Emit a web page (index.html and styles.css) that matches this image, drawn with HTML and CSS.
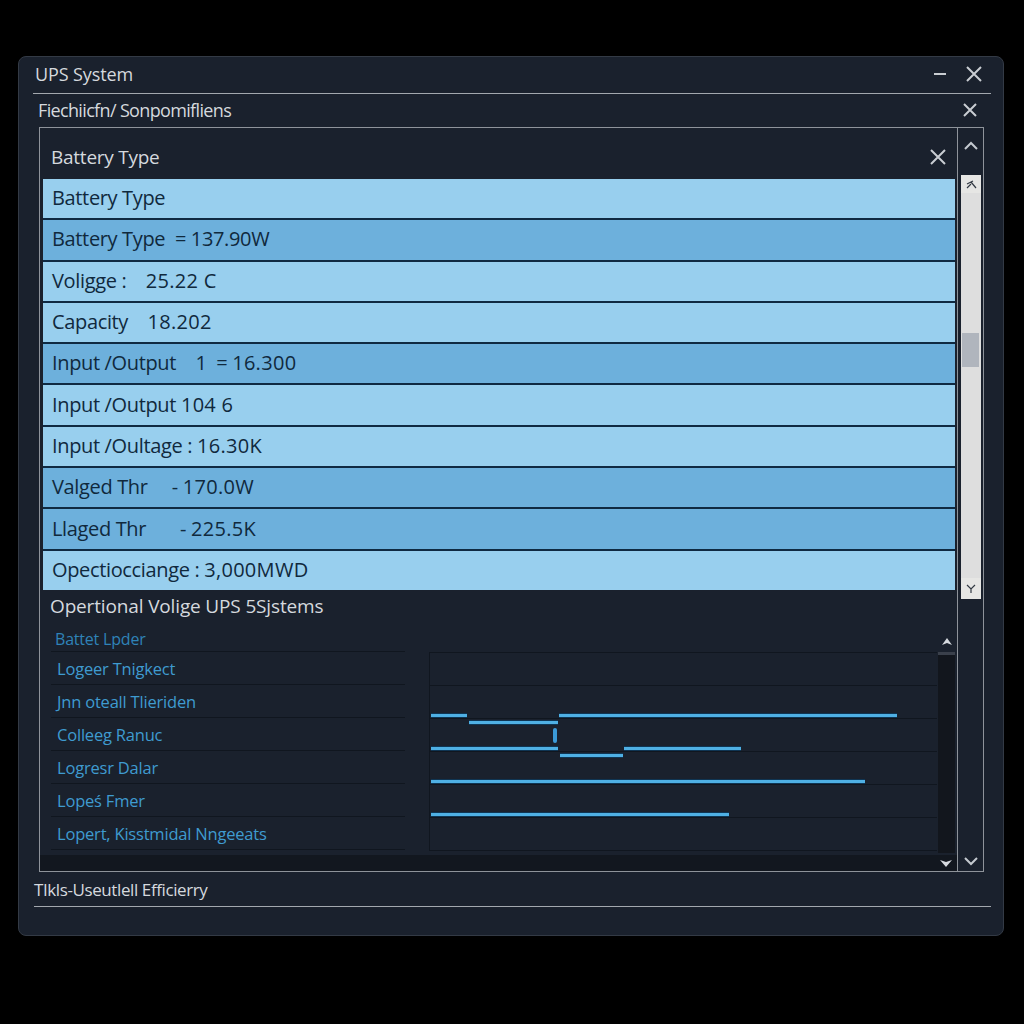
FILE: index.html
```html
<!DOCTYPE html>
<html lang="en">
<head>
    <meta charset="UTF-8">
    <title>UPS System</title>
    <link rel="stylesheet" href="styles.css">
</head>
<body>
    <div class="window">
        <div class="titlebar">
            <span class="title">UPS System</span>
            <svg class="icon-min" width="14" height="4" viewBox="0 0 14 4"><path d="M1 2H13"/></svg>
            <svg class="icon-x big" width="18" height="18" viewBox="0 0 18 18"><path d="M2 2L16 16M16 2L2 16"/></svg>
        </div>
        <div class="subbar">
            <span class="subtitle">Fiechiicfn/ Sonpomifliens</span>
            <svg class="icon-x" width="16" height="16" viewBox="0 0 16 16"><path d="M2 2L14 14M14 2L2 14"/></svg>
        </div>

        <div class="frame">
            <div class="main">
                <div class="panel-head">
                    <span>Battery Type</span>
                    <svg class="icon-x" width="18" height="18" viewBox="0 0 18 18"><path d="M2 2L16 16M16 2L2 16"/></svg>
                </div>

                <div class="rows">
                    <div class="row">Battery Type</div>
                    <div class="row dark">Battery Type &nbsp;= 137.90W</div>
                    <div class="row">Voligge : &nbsp; &nbsp;<span class="val">25.22 C</span></div>
                    <div class="row">Capacity &nbsp; &nbsp;<span class="val">18.202</span></div>
                    <div class="row dark">Input /Output &nbsp; &nbsp;1 &nbsp;= <span class="val">16.300</span></div>
                    <div class="row">Input /Output <span class="val">104 6</span></div>
                    <div class="row">Input /Oultage : <span class="val">16.30K</span></div>
                    <div class="row dark">Valged Thr &nbsp; &nbsp; - <span class="val">170.0W</span></div>
                    <div class="row dark">Llaged Thr &nbsp; &nbsp; &nbsp; - <span class="val">225.5K</span></div>
                    <div class="row">Opectiocciange : <span class="val">3,000MWD</span></div>
                </div>

                <div class="section-head">Opertional Volige UPS 5Sjstems</div>

                <div class="lower">
                    <div class="labels">
                        <div class="label first">Battet Lpder</div>
                        <div class="label">Logeer Tnigkect</div>
                        <div class="label">Jnn oteall Tlieriden</div>
                        <div class="label">Colleeg Ranuc</div>
                        <div class="label">Logresr Dalar</div>
                        <div class="label">Lopeś Fmer</div>
                        <div class="label">Lopert, Kisstmidal Nngeeats</div>
                    </div>

                    <div class="chart-col">
                        <svg class="chart" width="508" height="199" viewBox="0 0 508 199">
                            <path class="grid" d="M0.5 0.5H508M0.5 33.5H508M0.5 66.5H508M0.5 99.5H508M0.5 132.5H508M0.5 165.5H508M0.5 198.5H508M0.5 0V199"/>
                            <path class="glow" d="M2 63.5H38M130 63.5H468M40 70.5H129M2 96.5H129M195 96.5H312M131 103.5H194M2 129.5H436M2 162.5H300"/>
                            <path class="trace" d="M2 63.5H38M130 63.5H468M40 70.5H129M2 96.5H129M195 96.5H312M131 103.5H194M2 129.5H436M2 162.5H300"/>
                            <rect class="blip" x="124" y="76" width="4" height="15" rx="2"/>
                        </svg>
                    </div>

                    <div class="mini-scroll">
                        <svg class="arrow" width="12" height="9" viewBox="0 0 12 9"><path d="M6 1L11 8L6 6L1 8Z"/></svg>
                        <div class="mini-track"></div>
                    </div>
                </div>

                <div class="bottom-bar">
                    <svg class="arrow" width="14" height="9" viewBox="0 0 14 9"><path d="M1 1L7 3L13 1L7 8Z"/></svg>
                </div>
            </div>

            <div class="scroll-col">
                <svg class="chevron" width="16" height="10" viewBox="0 0 16 10"><path d="M2 8L8 2L14 8"/></svg>
                <div class="track">
                    <div class="track-btn">
                        <svg width="12" height="10" viewBox="0 0 12 10"><path d="M2 5L8 2M6 3L11 9M6 5L2 9"/></svg>
                    </div>
                    <div class="thumb"></div>
                    <div class="track-btn end">
                        <svg width="12" height="10" viewBox="0 0 12 10"><path d="M2 1L6 5L10 1M6 5V9"/></svg>
                    </div>
                </div>
                <svg class="chevron low" width="16" height="10" viewBox="0 0 16 10"><path d="M2 2L8 8L14 2"/></svg>
            </div>
        </div>

        <div class="status">TIkls-Useutlell Efficierry</div>
    </div>
</body>
</html>
```

FILE: styles.css
```css
body {
    margin: 0;
    background-color: #000;
    padding: 56px 20px 88px 18px;
    font-family: "Open Sans", "Noto Sans", sans-serif;
    color: #d5d9de;
}

svg {
    display: block;
    flex: none;
}

.window {
    height: 880px;
    box-sizing: border-box;
    background-color: #1a212d;
    border: 1px solid #333a45;
    border-radius: 8px;
    display: flex;
    flex-direction: column;
}

.titlebar {
    height: 37px;
    box-sizing: border-box;
    margin: 0 12px 0 14px;
    padding: 0 8px 3px 2px;
    border-bottom: 1px solid #a3a8ae;
    display: flex;
    align-items: center;
    gap: 18px;
}

.title {
    font-size: 18px;
    margin-right: auto;
    letter-spacing: -0.1px;
}

.icon-min path,
.icon-x path {
    stroke: #c9cdd2;
    stroke-width: 2;
    fill: none;
}

.subbar {
    height: 33px;
    box-sizing: border-box;
    margin: 0 18px 0 19px;
    padding: 0 7px 2px 0;
    display: flex;
    align-items: center;
    justify-content: space-between;
    font-size: 18px;
    letter-spacing: -0.65px;
}

.frame {
    width: 945px;
    height: 745px;
    margin-left: 20px;
    box-sizing: border-box;
    border: 1px solid #8e939a;
    display: flex;
}

.main {
    flex: 1;
    min-width: 0;
    display: flex;
    flex-direction: column;
}

.panel-head {
    height: 51px;
    padding: 6px 10px 0 11px;
    box-sizing: border-box;
    display: flex;
    align-items: center;
    justify-content: space-between;
    font-size: 19px;
    letter-spacing: -0.25px;
}

.rows {
    height: 411px;
    margin: 0 2px 0 3px;
    background-color: #0f2a42;
    display: grid;
    grid-template-rows: repeat(10, 1fr);
    gap: 2px;
}

.row {
    background-color: #98cfee;
    color: #10293d;
    font-size: 20px;
    letter-spacing: -0.35px;
    padding: 0 0 2px 9px;
    display: flex;
    align-items: center;
    white-space: pre;
}

.row.dark {
    background-color: #6db0dc;
}

.val {
    letter-spacing: 0.3px;
}

.section-head {
    height: 32px;
    padding-left: 10px;
    font-size: 19px;
    letter-spacing: -0.15px;
    display: flex;
    align-items: center;
}

.lower {
    height: 231px;
    padding-left: 11px;
    display: flex;
}

.labels {
    width: 354px;
    display: flex;
    flex-direction: column;
}

.label {
    height: 33px;
    box-sizing: border-box;
    padding-left: 6px;
    border-bottom: 1px solid #10161f;
    color: #3f9bd0;
    font-size: 16.5px;
    letter-spacing: -0.2px;
    display: flex;
    align-items: center;
}

.label.first {
    height: 30px;
    padding: 5px 0 0 4px;
    color: #2f83b8;
    font-size: 16px;
}

.chart-col {
    margin-left: 24px;
    padding-top: 30px;
}

.grid {
    stroke: #10161f;
    stroke-width: 1;
    fill: none;
}

.glow {
    stroke: #0f3553;
    stroke-width: 5;
    fill: none;
}

.trace {
    stroke: #4fb0e4;
    stroke-width: 3;
    fill: none;
}

.blip {
    fill: #3b9ad8;
}

.mini-scroll {
    width: 17px;
    margin-left: 1px;
    display: flex;
    flex-direction: column;
    align-items: center;
}

.mini-scroll .arrow {
    margin: 15px 0 6px;
}

.arrow path {
    fill: #d5d9de;
}

.mini-track {
    flex: 1;
    align-self: stretch;
    background-color: #12161d;
    border-top: 3px solid #3a404b;
}

.bottom-bar {
    flex: 1;
    margin-top: 2px;
    background-color: #12171f;
    display: flex;
    align-items: center;
    justify-content: flex-end;
    padding-right: 4px;
}

.scroll-col {
    width: 26px;
    box-sizing: border-box;
    border-left: 1px solid #8e939a;
    display: flex;
    flex-direction: column;
    align-items: center;
}

.chevron {
    margin-top: 13px;
}

.chevron path {
    stroke: #c4c9cf;
    stroke-width: 2;
    fill: none;
}

.chevron.low {
    margin-top: auto;
    margin-bottom: 5px;
}

.track {
    width: 20px;
    height: 424px;
    margin-top: 24px;
    background-color: #dedede;
    display: flex;
    flex-direction: column;
    align-items: center;
}

.track-btn {
    width: 20px;
    height: 18px;
    background-color: #e6e6e4;
    display: flex;
    align-items: center;
    justify-content: center;
}

.track-btn.end {
    height: 21px;
    margin-top: auto;
}

.track-btn path {
    stroke: #333a44;
    stroke-width: 1.2;
    fill: none;
}

.thumb {
    width: 17px;
    height: 34px;
    margin-top: 140px;
    background-color: #b0b5bd;
}

.status {
    height: 35px;
    box-sizing: border-box;
    margin: 0 12px 0 15px;
    border-bottom: 1px solid #a3a8ae;
    font-size: 17px;
    letter-spacing: -0.4px;
    display: flex;
    align-items: center;
}
```
